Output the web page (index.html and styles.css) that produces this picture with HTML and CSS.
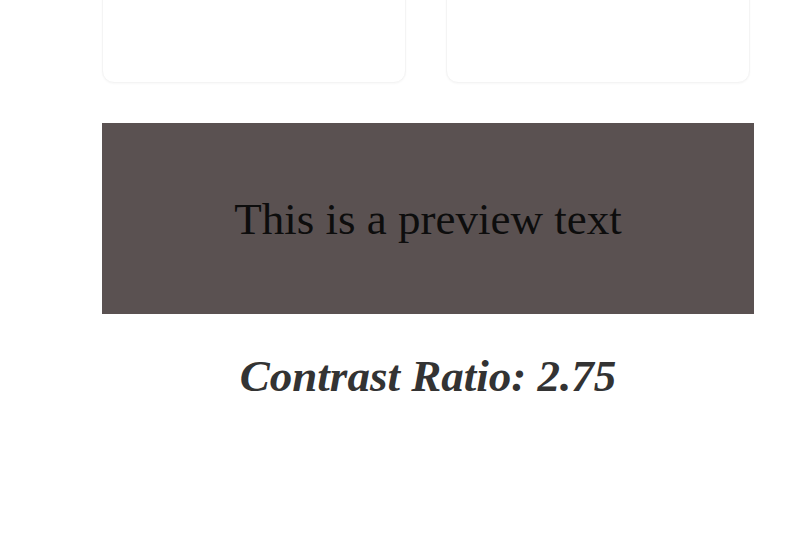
FILE: index.html
```html
<!DOCTYPE html>
<html>
<head>
<meta charset="utf-8">
<link rel="stylesheet" href="styles.css">
</head>
<body>
<div class="page">
  <div class="cards">
    <div class="card"></div>
    <div class="card"></div>
  </div>
  <div class="preview">This is a preview text</div>
  <h2 class="ratio">Contrast Ratio: 2.75</h2>
</div>
</body>
</html>
```
FILE: styles.css
```css
html, body {
  margin: 0;
  padding: 0;
  background: #ffffff;
}
.page {
  width: 652px;
  margin-left: 102px;
  display: flex;
  flex-direction: column;
}
.cards {
  display: grid;
  grid-template-columns: 304px 304px;
  column-gap: 40px;
  margin-top: -40px;
}
.card {
  box-sizing: border-box;
  height: 123px;
  background: #fff;
  border: 1px solid #f4f4f4;
  border-radius: 12px;
  box-shadow: 0 1px 2px rgba(0,0,0,0.03);
}
.preview {
  margin-top: 40px;
  height: 191px;
  background: #5a5151;
  color: #0d0d0d;
  font-family: "Liberation Serif", serif;
  font-size: 45px;
  display: flex;
  align-items: center;
  justify-content: center;
}
.ratio {
  margin: 36px 0 0;
  text-align: center;
  font-family: "Liberation Serif", serif;
  font-style: italic;
  font-weight: bold;
  font-size: 45px;
  color: #333;
}
```
